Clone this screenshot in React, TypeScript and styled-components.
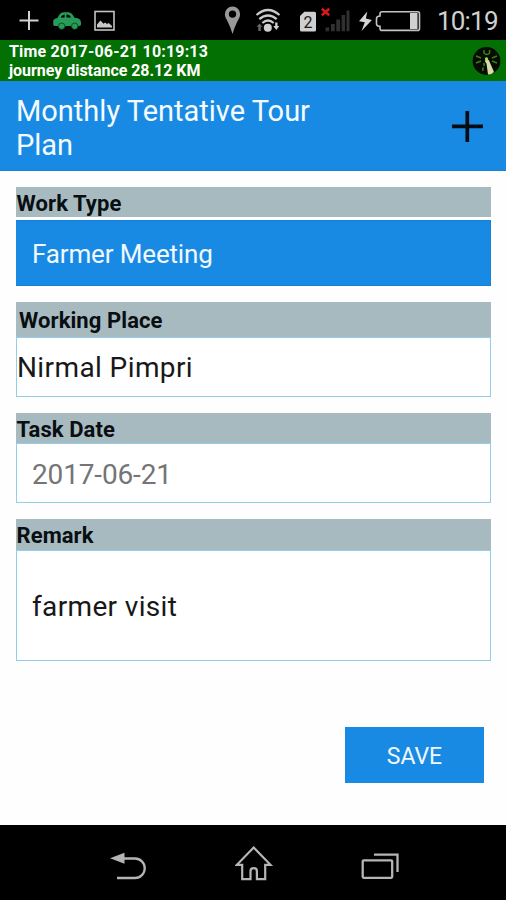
import React from "react";
import styled, { createGlobalStyle } from "styled-components";

const GlobalStyle = createGlobalStyle`
  * { box-sizing: border-box; }
  body { margin: 0; background: #fefefe; }
`;

const Screen = styled.div`
  width: 506px;
  height: 900px;
  display: flex;
  flex-direction: column;
  overflow: hidden;
  background: #fefefe;
  font-family: Roboto, sans-serif;
`;

const StatusBar = styled.header`
  height: 40px;
  flex: none;
  display: flex;
  align-items: center;
  justify-content: space-between;
  padding: 0 9px 0 16px;
  background: #000;
`;

const StatusGroup = styled.div`
  display: flex;
  align-items: center;
`;

const StatusIcon = styled.svg<{ $gap?: number }>`
  display: block;
  height: 40px;
  flex: none;
  margin-right: ${({ $gap = 0 }) => $gap}px;
`;

const Clock = styled.span`
  width: 60px;
  font-size: 26px;
  line-height: 40px;
  letter-spacing: -0.8px;
  color: #d0d0d0;
  margin-top: 2px;
`;

const TripBar = styled.section`
  height: 41px;
  flex: none;
  display: flex;
  justify-content: space-between;
  padding: 2px 5px 0 9px;
  background: #037003;
`;

const TripText = styled.div`
  font-size: 16px;
  line-height: 19px;
  font-weight: 700;
  color: #fff;
`;

const TripLine = styled.div<{ $spacing: number }>`
  letter-spacing: ${({ $spacing }) => $spacing}px;
  white-space: nowrap;
`;

const CompassIcon = styled.svg`
  margin-top: 4px;
`;

const AppBar = styled.section`
  height: 90px;
  flex: none;
  display: flex;
  justify-content: space-between;
  padding: 13px 22px 0 16px;
  background: #198ae4;
  border-bottom: 1px solid #1680da;
`;

const Title = styled.h1`
  margin: 0;
  width: 340px;
  font-size: 29px;
  line-height: 34px;
  font-weight: 400;
  color: #f4fbff;
`;

const AddButton = styled.button`
  border: 0;
  padding: 0;
  width: 34px;
  height: 34px;
  margin-top: 15px;
  background: none;
`;

const Form = styled.main`
  flex: 1;
  display: flex;
  flex-direction: column;
  gap: 16px;
  padding: 16px 15px 0 16px;
`;

const Field = styled.div`
  display: flex;
  flex-direction: column;
`;

const Label = styled.label<{ $height: number; $indent?: number; $spacing?: number }>`
  height: ${({ $height }) => $height}px;
  display: flex;
  align-items: center;
  padding: 2px 0 0 ${({ $indent = 0.5 }) => $indent}px;
  background: #a7bac0;
  font-size: 22px;
  font-weight: 700;
  letter-spacing: ${({ $spacing = 0.08 }) => $spacing}px;
  color: #080e11;
`;

const Picker = styled.div`
  height: 66px;
  margin-top: 3px;
  display: flex;
  align-items: center;
  padding: 2px 0 0 16px;
  background: #198ae4;
  border: 1px solid #1480d8;
  border-left-width: 0;
  font-size: 26px;
  letter-spacing: -0.15px;
  color: #f0f9ff;
`;

const Value = styled.div<{ $height: number; $indent: number; $muted?: boolean; $spacing?: number }>`
  height: ${({ $height }) => $height}px;
  display: flex;
  align-items: center;
  padding: ${({ $muted }) => ($muted ? 3 : 1)}px 0 0 ${({ $indent }) => $indent}px;
  background: #fff;
  border: 1px solid #94cfe9;
  font-size: 28px;
  letter-spacing: ${({ $spacing = 0 }) => $spacing}px;
  color: ${({ $muted }) => ($muted ? "#757575" : "#181818")};
`;

const SaveButton = styled.button`
  align-self: flex-end;
  width: 139px;
  height: 56px;
  margin: 50px 7px 0 0;
  border: 0;
  padding: 2px 0 0;
  background: #198ae4;
  font-family: inherit;
  font-size: 23px;
  color: #f0f9ff;
`;

const NavBar = styled.nav`
  height: 75px;
  flex: none;
  display: flex;
  justify-content: space-between;
  align-items: center;
  padding: 7px 105px 0 108px;
  background: #000;
`;

export default function App() {
  return (
    <>
      <GlobalStyle />
      <Screen>
        <StatusBar>
          <StatusGroup>
            <StatusIcon width="26" viewBox="16 0 26 40" $gap={10}>
              <path d="M29 11v19M19.5 20.5h19" stroke="#d2d2d2" strokeWidth="2" />
            </StatusIcon>
            <StatusIcon width="30" viewBox="52 0 30 40" $gap={11}>
              <path
                fill="#279c59"
                fillRule="evenodd"
                d="M53.2 24.5v-3.2q0-2.5 4.3-3.2 2.2-5.8 6.5-5.8h4.5q3.5.3 6 5.4l3.2.6q3.4.8 3.4 5.5 0 2.2-1.8 2.2h-.7a4.2 3.5 0 0 1-7.8 0h-5a4.2 3.5 0 0 1-8.1 0h-2.5q-2 0-2-1.500ZM60.5 17.500h4.100v-3q-2.800.3-4.100 3Zm6 0h4.600q-1.200-2.700-3.400-3h-1.200Z"
              />
              <circle cx="61.700" cy="26.200" r="3.200" fill="#279c59" stroke="#041d0e" strokeWidth="0.600" />
              <circle cx="74.700" cy="26.200" r="3.200" fill="#279c59" stroke="#041d0e" strokeWidth="0.600" />
            </StatusIcon>
            <StatusIcon width="22" viewBox="93 0 22 40">
              <rect x="95" y="11.500" width="19" height="18.500" fill="none" stroke="#c4c4c4" strokeWidth="1.600" />
              <path d="M97 27.500v-3l3.500-4 3 3.300 1.500-1.300 2 1.500 1.600-1 3.400 3v1.500Z" fill="#c8c8c8" />
            </StatusIcon>
          </StatusGroup>
          <StatusGroup>
            <StatusIcon width="17" viewBox="224 0 17 40" $gap={14}>
              <path
                fill="#999"
                fillRule="evenodd"
                d="M232.500 6.500a7.600 7.600 0 0 1 7.600 7.700c0 3-1.700 5.200-3.200 8.300-1.800 3.600-3.200 7.500-4.400 11.500-1.200-4-2.600-7.900-4.400-11.500-1.500-3.100-3.200-5.300-3.200-8.300a7.600 7.600 0 0 1 7.600-7.700Zm0 3.900a3.700 3.700 0 1 0 0 7.400 3.700 3.700 0 0 0 0-7.400Z"
              />
            </StatusIcon>
            <StatusIcon width="27" viewBox="255 0 27 40" $gap={16}>
              <g fill="none" stroke="#c9c9c9" strokeWidth="2.200">
                <path d="M256.500 15q11.500-10 23 0M259.300 19.200q8.700-7.400 17.400 0M262.300 23q5.700-5 11.400 0" />
              </g>
              <circle cx="267.800" cy="27.700" r="4" fill="#d0d0d0" />
              <path d="M259.500 23.500l3 3.200h-1.700v4.300h-2.500v-4.300h-1.700Z" fill="#666" />
              <path d="M275.200 22.500h2.300v3.500h1.800l-3 4-3-4h1.900Z" fill="#d0d0d0" />
            </StatusIcon>
            <StatusIcon width="19" viewBox="298 0 19 40" $gap={4}>
              <path d="M300 16l4.300-4.200h10.200q1.500 0 1.500 1.500v16.600q0 1.500-1.500 1.500H301.500q-1.500 0-1.500-1.500Z" fill="#cfcfcf" />
              <text x="307.900" y="28" fontSize="16" textAnchor="middle" fill="#181818">2</text>
            </StatusIcon>
            <StatusIcon width="30" viewBox="321 0 30 40" $gap={7}>
              <path d="M321.800 8.800l7.400 6.400M329.200 8.800l-7.400 6.400" stroke="#d9181b" strokeWidth="2.600" />
              <path d="M325.500 27.500h3.600v3.700h-3.600ZM331 24h3.800v7.200H331ZM336.300 19.500h3.800v11.700h-3.800ZM341.600 15h3.500v16.200h-3.500ZM346.500 10.500h3v20.700h-3Z" fill="#303030" />
            </StatusIcon>
            <StatusIcon width="16" viewBox="358 0 16 40" $gap={1}>
              <path d="M367.300 11.500l-8.300 9.700 5.800 1-3.300 8.800 10.400-11-6-1.500Z" fill="#d4d4d4" />
            </StatusIcon>
            <StatusIcon width="46" viewBox="375 0 46 40" $gap={16}>
              <path
                d="M382 11.800h35.500q2 0 2 2v14.600q0 2-2 2H382q-2 0-2-2v-2q-3.500-.2-3.500-2.500v-5.400q0-2.300 3.500-2.500v-2q0-2.200 2-2.200Z"
                fill="none"
                stroke="#c3c3c3"
                strokeWidth="1.600"
              />
              <path d="M410 13h7.500v16H410Z" fill="#d0d0d0" />
            </StatusIcon>
            <Clock>10:19</Clock>
          </StatusGroup>
        </StatusBar>

        <TripBar>
          <TripText>
            <TripLine $spacing={0.18}>Time 2017-06-21 10:19:13</TripLine>
            <TripLine $spacing={-0.04}>journey distance 28.12 KM</TripLine>
          </TripText>
          <CompassIcon width="29" height="30" viewBox="0 0 29 30">
            <circle cx="14.500" cy="15" r="13.900" fill="#050c03" />
            <g fill="none" stroke="#3f7e16" strokeWidth="1.500">
              <path d="M12 4v3q2.800 3 5.600 0V4M4 10l5 2M4 17l5-2M25 10l-5 2M25 17l-5-2M12 22q-2 0-1 3M12 17v3" />
            </g>
            <path d="M14 11.500l3 3 5 11.500q-3 3-6 2.500l-1.500-11-1.500-2Z" fill="#d8dca8" />
            <circle cx="14.500" cy="13" r="1.700" fill="#a8d84e" />
          </CompassIcon>
        </TripBar>

        <AppBar>
          <Title>
            Monthly Tentative Tour
            <br />
            Plan
          </Title>
          <AddButton aria-label="Add">
            <svg width="34" height="34" viewBox="450 109 34 34" display="block">
              <path d="M467.300 111v31M452 126.300h31" stroke="#050b12" strokeWidth="3.700" />
            </svg>
          </AddButton>
        </AppBar>

        <Form>
          <Field>
            <Label $height={30}>Work Type</Label>
            <Picker>Farmer Meeting</Picker>
          </Field>
          <Field>
            <Label $height={35} $indent={3}>Working Place</Label>
            <Value $height={60} $indent={0} $spacing={0.4}>Nirmal Pimpri</Value>
          </Field>
          <Field>
            <Label $height={30}>Task Date</Label>
            <Value $height={60} $indent={15} $spacing={-0.15} $muted>2017-06-21</Value>
          </Field>
          <Field>
            <Label $height={31}>Remark</Label>
            <Value $height={111} $indent={15} $spacing={0.35}>farmer visit</Value>
          </Field>
          <SaveButton>SAVE</SaveButton>
        </Form>

        <NavBar>
          <svg width="40" height="40" viewBox="108 846 40 40">
            <path d="M117 878h18a9.700 9.700 0 0 0 0-19.500h-12" fill="none" stroke="#b5b5b5" strokeWidth="2.300" />
            <path d="M110 858.300l14.500-5.500v11Z" fill="#b5b5b5" />
          </svg>
          <svg width="40" height="40" viewBox="235 845 40 40">
            <path
              d="M253.700 846.500l16.800 17.300h-5.300v14.400h-8.300v-8q0-3-3.200-3t-3.200 3v8h-8.300v-14.400h-5.300Z"
              fill="none"
              stroke="#b5b5b5"
              strokeWidth="2.200"
            />
          </svg>
          <svg width="40" height="40" viewBox="361 846 40 40">
            <rect x="362.700" y="860.300" width="29.500" height="17.500" rx="1" fill="none" stroke="#b5b5b5" strokeWidth="2.300" />
            <path d="M374 854.700h23.500V872" fill="none" stroke="#b5b5b5" strokeWidth="2.300" />
          </svg>
        </NavBar>
      </Screen>
    </>
  );
}
